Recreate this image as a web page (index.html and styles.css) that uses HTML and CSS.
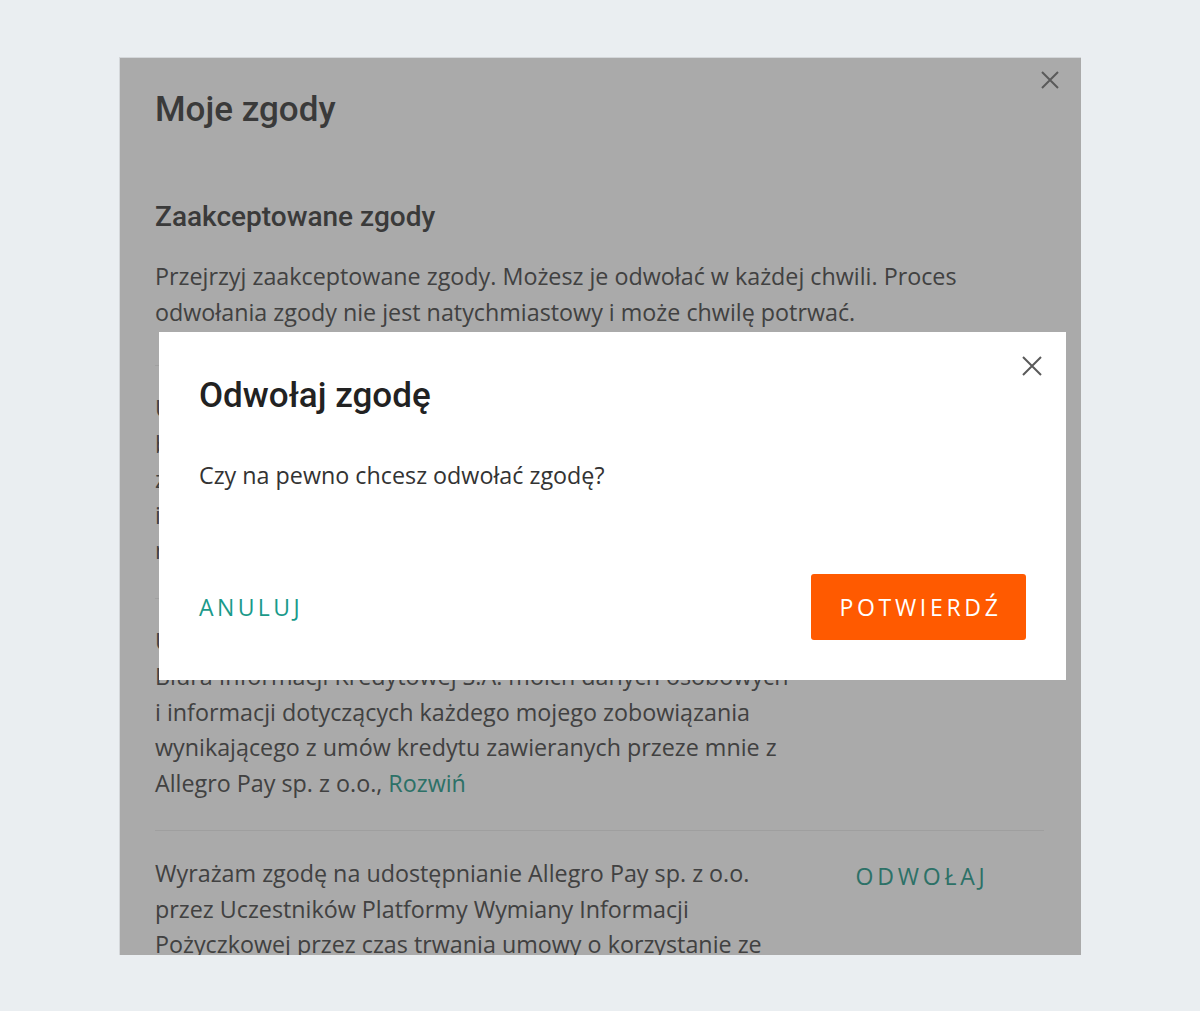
FILE: index.html
```html
<!DOCTYPE html>
<html lang="pl">
<head>
<meta charset="utf-8">
<title>Moje zgody</title>
<link rel="stylesheet" href="styles.css">
</head>
<body>
<div class="panel">
  <button class="panel-close" aria-label="Zamknij">
    <svg viewBox="0 0 18 18" width="18" height="18"><path d="M1 1 L17 17 M17 1 L1 17" stroke="currentColor" stroke-width="2" fill="none"/></svg>
  </button>
  <h1 class="panel-title">Moje zgody</h1>
  <h2 class="section-title">Zaakceptowane zgody</h2>
  <p class="section-desc">Przejrzyj zaakceptowane zgody. Możesz je odwołać w każdej chwili. Proces<br>odwołania zgody nie jest natychmiastowy i może chwilę potrwać.</p>
  <ul class="consents">
    <li class="consent">
      <p class="consent-text">Upoważniam Allegro Pay sp. z o.o. do wystąpienia<br>bezpośrednio do Biura Informacji Kredytowej S.A. o<br>zgodę na udostępnienie informacji gospodarczych<br>i danych dotyczących moich zobowiązań, w celu oceny<br>mojej wiarygodności płatniczej i analizy ryzyka.</p>
      <div class="consent-action"><button class="link-btn">ODWOŁAJ</button></div>
    </li>
    <li class="consent">
      <p class="consent-text">Upoważniam Allegro Pay sp. z o.o. do przekazywania do<br>Biura Informacji Kredytowej S.A. moich danych osobowych<br>i informacji dotyczących każdego mojego zobowiązania<br>wynikającego z umów kredytu zawieranych przeze mnie z<br>Allegro Pay sp. z o.o., <a class="expand" href="#">Rozwiń</a></p>
      <div class="consent-action"><button class="link-btn">ODWOŁAJ</button></div>
    </li>
    <li class="consent">
      <p class="consent-text">Wyrażam zgodę na udostępnianie Allegro Pay sp. z o.o.<br>przez Uczestników Platformy Wymiany Informacji<br>Pożyczkowej przez czas trwania umowy o korzystanie ze<br>środków w ramach usługi Allegro Pay informacji o mnie.</p>
      <div class="consent-action"><button class="link-btn">ODWOŁAJ</button></div>
    </li>
  </ul>
  <div class="overlay"></div>
  <div class="modal" role="dialog">
    <button class="modal-close" aria-label="Zamknij">
      <svg viewBox="0 0 20 20" width="20" height="20"><path d="M1 1 L19 19 M19 1 L1 19" stroke="currentColor" stroke-width="2" fill="none"/></svg>
    </button>
    <h3 class="modal-title">Odwołaj zgodę</h3>
    <p class="modal-text">Czy na pewno chcesz odwołać zgodę?</p>
    <div class="modal-actions">
      <button class="link-btn cancel">ANULUJ</button>
      <button class="primary-btn">POTWIERDŹ</button>
    </div>
  </div>
</div>
</body>
</html>
```

FILE: styles.css
```css
* { box-sizing: border-box; }

html, body {
  margin: 0;
  padding: 0;
}

body {
  background: #eaeef1;
  font-family: "Open Sans", "Liberation Sans", sans-serif;
  height: 1011px;
  overflow: hidden;
}

.panel {
  position: relative;
  margin: 57px 0 0 119px;
  width: 962px;
  height: 898px;
  overflow: hidden;
  background: #ffffff;
  border-top: 1px solid #d4d7da;
  border-left: 1px solid #d4d7da;
  padding: 30px 37px 0 35px;
}

.panel-close {
  position: absolute;
  top: 13px;
  right: 22px;
  width: 18px;
  height: 18px;
  padding: 0;
  border: 0;
  background: none;
  color: #888888;
  display: block;
}
.panel-close svg { display: block; }

.panel-title {
  margin: 0;
  font-family: Roboto, "Liberation Sans", sans-serif;
  font-weight: 500;
  font-size: 35px;
  line-height: 44px;
  color: #585858;
}

.section-title {
  margin: 69px 0 0;
  font-family: Roboto, "Liberation Sans", sans-serif;
  font-weight: 500;
  font-size: 28px;
  line-height: 32px;
  color: #585858;
}

.section-desc {
  margin: 26px 0 0;
  font-size: 23.3px;
  line-height: 35.5px;
  color: #626262;
}

.consents {
  list-style: none;
  margin: 35px 0 0;
  padding: 0;
}

.consent {
  display: flex;
  border-top: 1px solid #efefef;
  padding: 25px 0 29px;
}

.consent-text {
  margin: 0;
  width: 645px;
  flex: none;
  font-size: 23.3px;
  line-height: 35.5px;
  color: #626262;
  white-space: nowrap;
}

.expand {
  color: #43aa9b;
  text-decoration: none;
}

.consent-action {
  flex: 1;
  display: flex;
  justify-content: center;
  align-items: flex-start;
  padding-top: 4px;
}

.link-btn {
  border: 0;
  background: none;
  padding: 0;
  font-family: "Open Sans", "Liberation Sans", sans-serif;
  font-size: 23px;
  line-height: 32px;
  letter-spacing: 3.8px;
  color: #43aa9b;
}

.overlay {
  position: absolute;
  inset: 0;
  background: rgba(0, 0, 0, 0.333);
}

.modal {
  position: absolute;
  left: 39px;
  top: 274px;
  width: 907px;
  height: 348px;
  background: #ffffff;
  padding: 42px 40px 40px 40px;
  display: flex;
  flex-direction: column;
}

.modal-close {
  position: absolute;
  top: 24px;
  right: 24px;
  width: 20px;
  height: 20px;
  padding: 0;
  border: 0;
  background: none;
  color: #5a5a5a;
}
.modal-close svg { display: block; }

.modal-title {
  margin: 0;
  font-family: Roboto, "Liberation Sans", sans-serif;
  font-weight: 500;
  font-size: 35px;
  line-height: 44px;
  color: #222222;
}

.modal-text {
  margin: 40px 0 0;
  font-size: 23.3px;
  line-height: 35.5px;
  color: #333333;
}

.modal-actions {
  margin-top: auto;
  display: flex;
  justify-content: space-between;
  align-items: center;
}

.cancel {
  letter-spacing: 3.4px;
  color: #1a9a8a;
}

.primary-btn {
  height: 66px;
  width: 215px;
  padding: 0 0 0 4px;
  border: 0;
  border-radius: 3px;
  background: #ff5a00;
  color: #ffffff;
  font-family: "Open Sans", "Liberation Sans", sans-serif;
  font-size: 23px;
  letter-spacing: 3.7px;
  display: flex;
  align-items: center;
  justify-content: center;
}
```
